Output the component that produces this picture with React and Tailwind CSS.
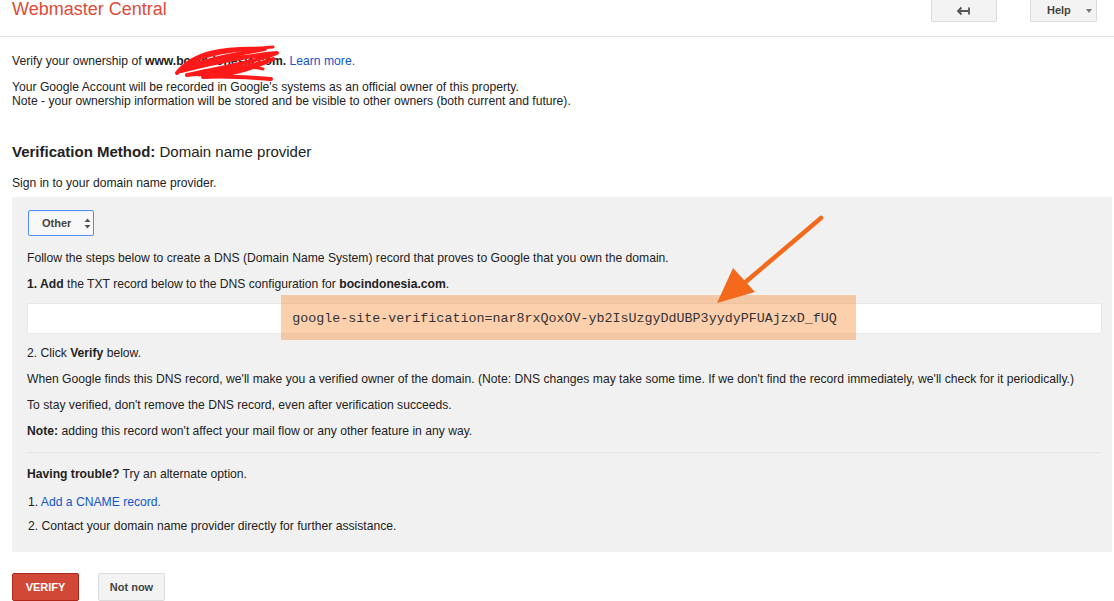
import React from 'react';

const Scribble = () => (
    <svg className="absolute left-[28px] top-[-9px] pointer-events-none" width="110" height="36" viewBox="0 0 110 36" fill="none">
        <path d="M4 28 C 20 8, 50 2, 92 4 C 70 8, 30 14, 8 26 C 40 18, 80 10, 104 8 C 80 18, 40 24, 14 30 C 50 26, 80 22, 100 14 C 70 28, 50 30, 30 32 C 60 30, 90 34, 98 34" stroke="#ff1a1a" strokeWidth="4" strokeLinecap="round" strokeLinejoin="round" />
        <path d="M20 16 C 45 6, 75 4, 100 2 M 10 22 C 40 12, 70 10, 96 12 M 26 30 C 50 22, 72 20, 90 24" stroke="#ff1a1a" strokeWidth="3" strokeLinecap="round" />
    </svg>
);

const Arrow = () => (
    <svg className="absolute left-[700px] top-[205px] pointer-events-none" width="140" height="110" viewBox="0 0 140 110" fill="none">
        <path d="M121 13 L 42 80" stroke="#f36a1c" strokeWidth="4.5" strokeLinecap="round" />
        <path d="M17 98 L 33 63 L 55 87 Z" fill="#f36a1c" />
    </svg>
);

const App = () => {
    return (
        <div className="relative w-[1114px] h-[601px] overflow-hidden bg-white text-[#222] font-['Liberation_Sans',Arial,sans-serif]">
            {/* Header */}
            <header className="h-[37px] border-b border-[#e5e5e5] flex justify-between pl-[12px]">
                <h1 className="text-[18px] leading-[20px] text-[#dd4b39] -mt-[1px]">Webmaster Central</h1>
                <div className="flex gap-[33px] pr-[17px]">
                    <button className="w-[66px] h-[31px] -mt-[9px] bg-[#f3f3f3] border border-[#dcdcdc] rounded-[2px] flex items-center justify-center pt-[8px]">
                        <svg width="16" height="10" viewBox="0 0 16 10" fill="none">
                            <path d="M2 5 H 13 M 13 1.5 V 8.5 M 5.5 1.5 L 2 5 L 5.5 8.5" stroke="#555" strokeWidth="1.8" />
                        </svg>
                    </button>
                    <button className="w-[67px] h-[31px] -mt-[9px] bg-[#f3f3f3] border border-[#dcdcdc] rounded-[2px] flex items-center pt-[8px] pl-[16px]">
                        <span className="text-[11px] font-bold text-[#444]">Help</span>
                        <span className="ml-[15px] w-0 h-0 border-l-[3.5px] border-r-[3.5px] border-t-[4px] border-l-transparent border-r-transparent border-t-[#777]" />
                    </button>
                </div>
            </header>

            {/* Intro */}
            <div className="pl-[12px] text-[12.15px]">
                <p className="mt-[16px] leading-[16px]">
                    Verify your ownership of{' '}
                    <span className="relative font-bold">
                        www.bocindonesia.com.
                        <Scribble />
                    </span>{' '}
                    <a className="text-[#1155cc]">Learn more.</a>
                </p>
                <p className="mt-[11px] leading-[14px]">
                    Your Google Account will be recorded in Google's systems as an official owner of this property.
                    <br />
                    Note - your ownership information will be stored and be visible to other owners (both current and future).
                </p>

                <h2 className="mt-[35px] text-[15px] leading-[18px]">
                    <span className="font-bold">Verification Method:</span> Domain name provider
                </h2>
                <p className="mt-[14px] leading-[16px]">Sign in to your domain name provider.</p>
            </div>

            {/* Panel */}
            <div className="ml-[12px] mt-[6px] w-[1100px] bg-[#f1f1f1] pl-[15px] pr-[10px] pt-[13px] pb-[18px] text-[12.15px]">
                <div className="ml-[1px] w-[66px] h-[26px] border border-[#4d90fe] rounded-[2px] bg-[#f8f8f8] flex items-center pl-[13px] shadow-[inset_0_1px_1px_rgba(0,0,0,0.05)]">
                    <span className="text-[11px] font-bold text-[#444]">Other</span>
                    <svg className="ml-[13px]" width="7" height="11" viewBox="0 0 7 11">
                        <path d="M3.5 0.5 L 6.5 4 H 0.5 Z M 3.5 10.5 L 6.5 7 H 0.5 Z" fill="#555" />
                    </svg>
                </div>
                <p className="mt-[14px] leading-[16px]">
                    Follow the steps below to create a DNS (Domain Name System) record that proves to Google that you own the domain.
                </p>
                <p className="mt-[10px] leading-[16px]">
                    <span className="font-bold">1. Add</span> the TXT record below to the DNS configuration for <span className="font-bold">bocindonesia.com</span>.
                </p>
                <div className="mt-[11px] w-[1075px] h-[31px] bg-white border border-[#e8e8e8] flex items-center justify-center">
                    <span className="relative font-['Liberation_Mono','Courier_New',monospace] text-[13.35px] leading-[16px] text-[#333]">
                        <span className="absolute -left-[11px] -right-[19px] -top-[16px] -bottom-[13px] bg-[rgba(247,140,60,0.42)]" />
                        <span className="relative">google-site-verification=nar8rxQoxOV-yb2IsUzgyDdUBP3yydyPFUAjzxD_fUQ</span>
                    </span>
                </div>
                <p className="mt-[11px] leading-[16px]">
                    2. Click <span className="font-bold">Verify</span> below.
                </p>
                <p className="mt-[10px] leading-[16px]">
                    When Google finds this DNS record, we'll make you a verified owner of the domain. (Note: DNS changes may take some time. If we don't find the record immediately, we'll check for it periodically.)
                </p>
                <p className="mt-[10px] leading-[16px]">To stay verified, don't remove the DNS record, even after verification succeeds.</p>
                <p className="mt-[10px] leading-[16px]">
                    <span className="font-bold">Note:</span> adding this record won't affect your mail flow or any other feature in any way.
                </p>
                <div className="mt-[13px] w-[1073px] border-t border-[#e3e3e3]" />
                <p className="mt-[13px] leading-[16px]">
                    <span className="font-bold">Having trouble?</span> Try an alternate option.
                </p>
                <ol className="mt-[12px] pl-[1px] space-y-[8px]">
                    <li className="leading-[16px]">1. <a className="text-[#1155cc]">Add a CNAME record.</a></li>
                    <li className="leading-[16px]">2. Contact your domain name provider directly for further assistance.</li>
                </ol>
            </div>

            {/* Actions */}
            <div className="pl-[12px] mt-[21px] flex gap-[19px]">
                <button className="w-[67px] h-[28px] bg-[#d14836] border border-[#b0281a] rounded-[2px] text-white text-[11px] font-bold">VERIFY</button>
                <button className="w-[67px] h-[28px] bg-[#f3f3f3] border border-[#dcdcdc] rounded-[2px] text-[#444] text-[11px] font-bold">Not now</button>
            </div>

            <Arrow />
        </div>
    );
};

export default App;
